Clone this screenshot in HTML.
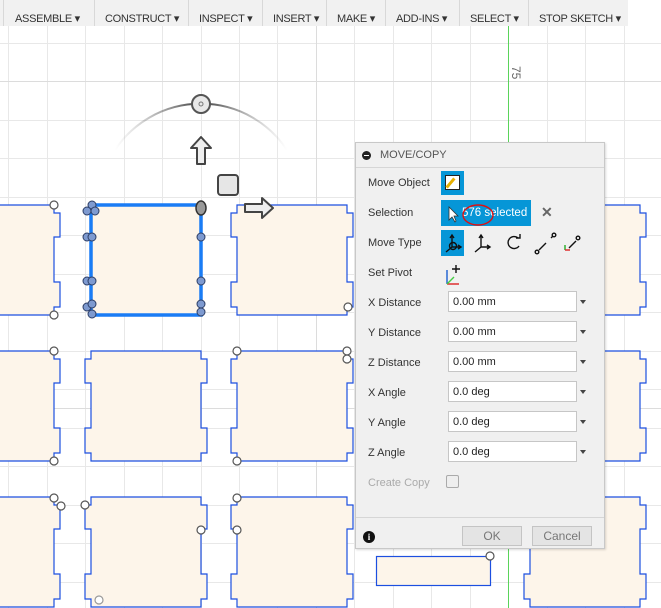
<!DOCTYPE html>
<html><head><meta charset="utf-8"><style>
*{margin:0;padding:0;box-sizing:border-box}
body{width:661px;height:608px;overflow:hidden;background:#fff;font-family:"Liberation Sans",sans-serif;position:relative}
#tb{position:absolute;left:0;top:0;width:628px;height:26px;background:#f1f1f1}
#tb span{position:absolute;top:12px;font-size:11px;color:#333;letter-spacing:-0.3px}
#tb i{position:absolute;top:0;width:1px;height:26px;background:#d8d8d8}
#dlg{position:absolute;left:355px;top:142px;width:250px;height:407px;background:#f0f0f0;border:1px solid #c8c8c8;box-shadow:1px 1px 2px rgba(0,0,0,.15);font-size:11px;color:#333}
#dlg .hd{height:25px;border-bottom:1px solid #d6d6d6;line-height:24px;padding-left:24px;color:#555}
#dlg .hd b{position:absolute;left:6px;top:8px;width:9px;height:9px;border-radius:50%;background:#222}
#dlg .hd b:after{content:"";position:absolute;left:2px;top:4px;width:5px;height:1px;background:#fff}
.lb{position:absolute;left:12px;font-size:11px;color:#333}
.in{position:absolute;left:92px;width:129px;height:21px;background:#fff;border:1px solid #c6c6c6;font-size:11px;line-height:20px;padding-left:4px;color:#222}
.ar{position:absolute;left:224px;width:0;height:0;border-left:3px solid transparent;border-right:3px solid transparent;border-top:4px solid #444}
.btn{position:absolute;top:383px;height:20px;background:#e4e4e4;border:1px solid #c4c4c4;text-align:center;line-height:18px;font-size:12px;color:#777}
</style></head><body>
<svg width="661" height="608" style="position:absolute;left:0;top:0">
<defs>
<path id="pn" d="M0,0H110V8H116V32H110V77H116V102H110V110H0V102H-6V77H0V32H-6V8H0Z"/>
<linearGradient id="ag" x1="0" x2="1"><stop offset="0" stop-color="#999" stop-opacity="0"/><stop offset=".45" stop-color="#555"/><stop offset=".55" stop-color="#555"/><stop offset="1" stop-color="#999" stop-opacity="0"/></linearGradient>
</defs>
<g stroke="#e8e8e8" stroke-width="1">
<path d="M8.5,0V608M47.5,0V608M85.5,0V608M124.5,0V608M162.5,0V608M201.5,0V608M239.5,0V608M277.5,0V608M316.5,0V608M354.5,0V608M393.5,0V608M431.5,0V608M470.5,0V608M547.5,0V608M585.5,0V608M624.5,0V608"/>
<path d="M0,43.5H661M0,81.5H661M0,120.5H661M0,158.5H661M0,197.5H661M0,235.5H661M0,274.5H661M0,312.5H661M0,351.5H661M0,389.5H661M0,428.5H661M0,466.5H661M0,505.5H661M0,543.5H661M0,582.5H661"/>
</g>
<path d="M0,81.5H661M0,408.5H661M316.5,0V608" stroke="#dcdcdc"/>
<line x1="508.5" y1="26" x2="508.5" y2="608" stroke="#5ad45a"/>
<text x="512" y="66" transform="rotate(90 512 66)" font-size="12" fill="#666" font-family="Liberation Sans">75</text>
<g fill="#fdf5ea" stroke="#1c4fe0" stroke-width="1.2">
<use href="#pn" x="-56" y="205"/><use href="#pn" x="237" y="205"/><use href="#pn" x="530" y="205"/>
<use href="#pn" x="-56" y="351"/><use href="#pn" x="91" y="351"/><use href="#pn" x="237" y="351"/><use href="#pn" x="530" y="351"/>
<use href="#pn" x="-56" y="497"/><use href="#pn" x="91" y="497"/><use href="#pn" x="237" y="497"/><use href="#pn" x="530" y="497"/>
<rect x="376.5" y="556.5" width="114" height="29"/>
</g>
<rect x="91" y="205" width="110" height="110" fill="#fdf5ea"/>
<rect x="91" y="205" width="110" height="110" fill="none" stroke="#1a7cf5" stroke-width="3.5"/>
<g fill="#fff" stroke="#555" stroke-width="1.2">
<circle cx="54" cy="205" r="4"/><circle cx="54" cy="315" r="4"/><circle cx="54" cy="351" r="4"/><circle cx="54" cy="461" r="4"/>
<circle cx="54" cy="498" r="4"/><circle cx="61" cy="506" r="4"/><circle cx="85" cy="505" r="4"/><circle cx="201" cy="530" r="4"/>
<circle cx="237" cy="351" r="4"/><circle cx="237" cy="461" r="4"/><circle cx="347" cy="351" r="4"/><circle cx="347" cy="359" r="4"/>
<circle cx="237" cy="498" r="4"/><circle cx="237" cy="530" r="4"/><circle cx="99" cy="600" r="4" stroke="#999"/>
<circle cx="348" cy="307" r="4"/><circle cx="490" cy="556" r="4"/>
</g>
<g fill="#7e9ad0" stroke="#2c3e66" stroke-width="1">
<circle cx="92" cy="205" r="4"/><circle cx="87" cy="211" r="4"/><circle cx="95" cy="211" r="4"/>
<circle cx="87" cy="237" r="4"/><circle cx="92" cy="237" r="4"/>
<circle cx="87" cy="281" r="4"/><circle cx="92" cy="281" r="4"/>
<circle cx="87" cy="307" r="4"/><circle cx="92" cy="314" r="4"/><circle cx="92" cy="304" r="4"/>
<circle cx="201" cy="237" r="4"/><circle cx="201" cy="281" r="4"/><circle cx="201" cy="304" r="4"/><circle cx="201" cy="312" r="4"/>
</g>
<ellipse cx="201" cy="208" rx="5" ry="7" fill="#999" stroke="#333" stroke-width="1.5"/>
<path d="M115,150 A103,103 0 0 1 287,150" fill="none" stroke="url(#ag)" stroke-width="2"/>
<circle cx="201" cy="104" r="9" fill="#e8e8e8" stroke="#555" stroke-width="2"/>
<circle cx="201" cy="104" r="2" fill="none" stroke="#777"/>
<path d="M201,137 L191,148 H197 V164 H205 V148 H211 Z" fill="#eee" stroke="#444" stroke-width="2" stroke-linejoin="round"/>
<rect x="218" y="175" width="20" height="20" rx="3" fill="#e6e6e6" stroke="#444" stroke-width="2"/>
<path d="M273,208 L262,198 V204 H245 V212 H262 V218 Z" fill="#eee" stroke="#444" stroke-width="2" stroke-linejoin="round"/>
</svg>
<div id="tb">
<i style="left:3px"></i><i style="left:94px"></i><i style="left:188px"></i><i style="left:262px"></i><i style="left:326px"></i><i style="left:385px"></i><i style="left:459px"></i><i style="left:528px"></i>
<span style="left:15px">ASSEMBLE ▾</span><span style="left:105px">CONSTRUCT ▾</span><span style="left:199px">INSPECT ▾</span><span style="left:273px">INSERT ▾</span><span style="left:337px">MAKE ▾</span><span style="left:396px">ADD-INS ▾</span><span style="left:470px">SELECT ▾</span><span style="left:539px">STOP SKETCH ▾</span>
</div>
<div id="dlg">
<div class="hd"><b></b>MOVE/COPY</div>
<div class="lb" style="top:34px">Move Object</div>
<div style="position:absolute;left:85px;top:28px;width:23px;height:24px;background:#0696d7"><div style="position:absolute;left:4px;top:4px;width:15px;height:15px;background:#fff;border:1px solid #222"></div><div style="position:absolute;left:8px;top:6px;width:3px;height:12px;background:#e8b000;transform:rotate(40deg)"></div></div>
<div class="lb" style="top:64px">Selection</div>
<div style="position:absolute;left:85px;top:57px;width:90px;height:26px;background:#0696d7;color:#fff;font-size:11.5px;line-height:26px;padding-left:21px">576 selected</div>
<svg style="position:absolute;left:85px;top:57px" width="95" height="32"><path d="M8,7 V20 L11,17 L14,22 L15,21 L13,16 H17 Z" fill="#fff" stroke="#333" stroke-width=".8"/><ellipse cx="37" cy="15" rx="15" ry="10" fill="none" stroke="#e01010" stroke-width="1.4"/></svg>
<div style="position:absolute;left:185px;top:61px;font-size:14px;color:#666;font-weight:bold">✕</div>
<div class="lb" style="top:94px">Move Type</div>
<div style="position:absolute;left:85px;top:87px;width:23px;height:26px;background:#0696d7"></div>
<svg style="position:absolute;left:85px;top:87px" width="150" height="60" stroke="#111" fill="none" stroke-width="1.4">
<path d="M11,6V17H19M11,17L5,22M9,8L11,5L13,8M17,15L20,17L17,19"/><circle cx="12" cy="16" r="3.5"/>
<path d="M40,6V17H48M40,17L34,22M38,8L40,5L42,8M46,15L49,17L46,19"/>
<path d="M77,8A6,6 0 1 0 78,16"/><path d="M75,8H79V4" />
<path d="M98,20L105,13M110,8L112,6" /><circle cx="96" cy="22" r="1.8"/><circle cx="113" cy="5" r="1.8"/>
<path d="M128,18L135,11" /><circle cx="137" cy="8" r="1.8"/>
<path d="M124,15V20" stroke="#2a2"/><path d="M124,20H129" stroke="#d22"/>
<path d="M6,40V54" stroke="#1a5fd0"/><path d="M6,54H18" stroke="#d22"/><path d="M6,54L13,47" stroke="#4c4"/><path d="M11,39H19M15,35V43"/>
</svg>
<div class="lb" style="top:124px">Set Pivot</div>
<div class="lb" style="top:154px">X Distance</div><div class="in" style="top:148px">0.00 mm</div><div class="ar" style="top:157px"></div>
<div class="lb" style="top:184px">Y Distance</div><div class="in" style="top:178px">0.00 mm</div><div class="ar" style="top:187px"></div>
<div class="lb" style="top:214px">Z Distance</div><div class="in" style="top:208px">0.00 mm</div><div class="ar" style="top:217px"></div>
<div class="lb" style="top:244px">X Angle</div><div class="in" style="top:238px">0.0 deg</div><div class="ar" style="top:247px"></div>
<div class="lb" style="top:274px">Y Angle</div><div class="in" style="top:268px">0.0 deg</div><div class="ar" style="top:277px"></div>
<div class="lb" style="top:304px">Z Angle</div><div class="in" style="top:298px">0.0 deg</div><div class="ar" style="top:307px"></div>
<div class="lb" style="top:334px;color:#aaa">Create Copy</div>
<div style="position:absolute;left:90px;top:332px;width:13px;height:13px;border:1px solid #aaa;border-radius:2px;background:#eee"></div>
<div style="position:absolute;left:0;top:374px;width:248px;height:1px;background:#d6d6d6"></div>
<div style="position:absolute;left:7px;top:388px;width:12px;height:12px;border-radius:50%;background:#111;color:#fff;font-size:9px;font-weight:bold;text-align:center;line-height:12px;font-family:'Liberation Serif',serif">i</div>
<div class="btn" style="left:106px;width:60px">OK</div>
<div class="btn" style="left:176px;width:60px">Cancel</div>
</div>
</body></html>
